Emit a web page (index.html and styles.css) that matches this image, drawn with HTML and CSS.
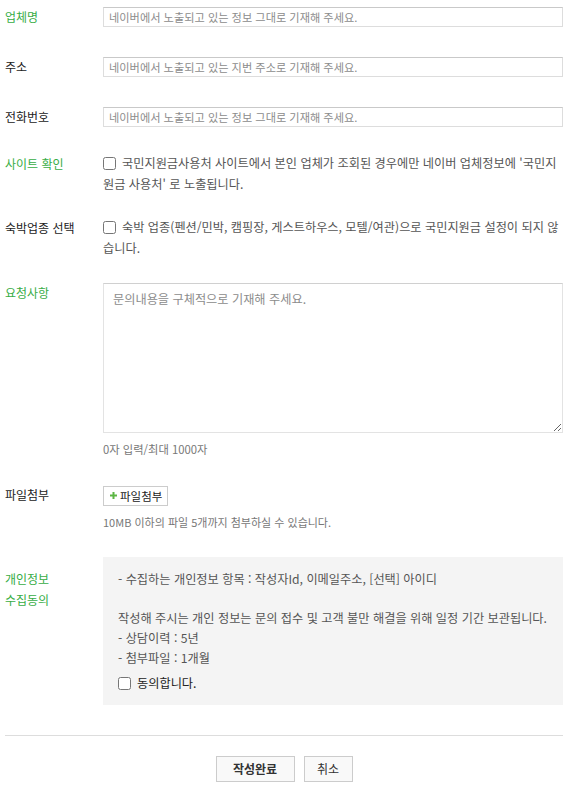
FILE: index.html
```html
<!DOCTYPE html>
<html lang="ko">
<head>
  <meta charset="utf-8">
  <title>문의하기</title>
  <link rel="stylesheet" href="styles.css">
</head>
<body>
  <form class="inquiry">
    <div class="row row-input">
      <label class="label point">업체명</label>
      <div class="field"><input type="text" class="text" placeholder="네이버에서 노출되고 있는 정보 그대로 기재해 주세요."></div>
    </div>
    <div class="row row-input">
      <label class="label">주소</label>
      <div class="field"><input type="text" class="text" placeholder="네이버에서 노출되고 있는 지번 주소로 기재해 주세요."></div>
    </div>
    <div class="row row-input row-last-input">
      <label class="label">전화번호</label>
      <div class="field"><input type="text" class="text" placeholder="네이버에서 노출되고 있는 정보 그대로 기재해 주세요."></div>
    </div>

    <div class="row row-check">
      <span class="label point">사이트 확인</span>
      <label class="field check-text"><input type="checkbox" class="chk">국민지원금사용처 사이트에서 본인 업체가 조회된 경우에만 네이버 업체정보에 '국민지원금 사용처' 로 노출됩니다.</label>
    </div>
    <div class="row row-check row-check2">
      <span class="label">숙박업종 선택</span>
      <label class="field check-text"><input type="checkbox" class="chk">숙박 업종(펜션/민박, 캠핑장, 게스트하우스, 모텔/여관)으로 국민지원금 설정이 되지 않습니다.</label>
    </div>

    <div class="row row-textarea">
      <label class="label point">요청사항</label>
      <div class="field">
        <textarea class="area" placeholder="문의내용을 구체적으로 기재해 주세요."></textarea>
        <p class="help count">0자 입력/최대 1000자</p>
      </div>
    </div>

    <div class="row row-file">
      <span class="label">파일첨부</span>
      <div class="field">
        <button type="button" class="btn-file"><svg width="7" height="7" viewBox="0 0 7 7"><path d="M2.5 0h2v2.5H7v2H4.5V7h-2V4.5H0v-2h2.5z" fill="#5cb644"/></svg>파일첨부</button>
        <p class="help">10MB 이하의 파일 5개까지 첨부하실 수 있습니다.</p>
      </div>
    </div>

    <div class="row row-agree">
      <span class="label point">개인정보<br>수집동의</span>
      <div class="field agree-box">
        <p>- 수집하는 개인정보 항목 : 작성자Id, 이메일주소, [선택] 아이디</p>
        <p class="gap">작성해 주시는 개인 정보는 문의 접수 및 고객 불만 해결을 위해 일정 기간 보관됩니다.</p>
        <p>- 상담이력 : 5년</p>
        <p>- 첨부파일 : 1개월</p>
        <label class="agree-check"><input type="checkbox" class="chk">동의합니다.</label>
      </div>
    </div>

    <div class="actions">
      <button type="button" class="btn btn-submit">작성완료</button>
      <button type="button" class="btn">취소</button>
    </div>
  </form>
</body>
</html>
```

FILE: styles.css
```css
body {
  margin: 0;
  font-family: "Noto Sans CJK KR", "Noto Sans", sans-serif;
  font-size: 12px;
  color: #333;
  background: #fff;
}
p {
  margin: 0;
}
.inquiry {
  padding: 7px 8px 0 5px;
}
.row {
  display: grid;
  grid-template-columns: 98px 1fr;
  align-items: start;
}
.label {
  font-size: 12px;
  color: #222;
  line-height: 20px;
}
.label.point {
  color: #37ad45;
}

/* text inputs */
.row-input {
  margin-bottom: 30px;
}
.row-last-input {
  margin-bottom: 26px;
}
.text {
  box-sizing: border-box;
  width: 100%;
  height: 20px;
  margin: 0;
  padding: 0 5px;
  border: 1px solid #ddd;
  border-top-color: #c9c9c9;
  font-family: inherit;
  font-size: 11.2px;
  color: #333;
  outline: none;
}
.text::placeholder,
.area::placeholder {
  color: #8c8c8c;
}

/* checkbox rows */
.row-check {
  margin-bottom: 22px;
}
.row-check .label {
  line-height: 21px;
}
.check-text {
  line-height: 21px;
  font-size: 12.2px;
  color: #555;
}
.chk {
  width: 13px;
  height: 13px;
  margin: 0 6px 0 0;
  vertical-align: -2px;
}
.row-check2 {
  margin-bottom: 24px;
}

/* textarea */
.row-textarea {
  margin-bottom: 27px;
}
.area {
  display: block;
  box-sizing: border-box;
  width: 100%;
  height: 150px;
  margin: 0;
  padding: 7px 9px;
  border: 1px solid #e3e3e3;
  border-top-color: #d0d0d0;
  font-family: inherit;
  font-size: 12.2px;
  line-height: 17px;
  outline: none;
}
.help {
  margin-top: 7px;
  font-size: 11px;
  line-height: 18px;
  color: #777;
}
.help.count {
  font-size: 11.3px;
}

/* file */
.row-file {
  margin-bottom: 26px;
}
.btn-file {
  display: inline-flex;
  align-items: center;
  gap: 3px;
  height: 20px;
  margin: 0;
  padding: 0 5px 0 6px;
  border: 1px solid #ccc;
  background: #fff;
  font-family: inherit;
  font-size: 11.5px;
  color: #222;
  cursor: pointer;
}

/* privacy agreement */
.row-agree {
  margin-bottom: 30px;
}
.row-agree .label {
  line-height: 21px;
  padding-top: 11px;
}
.agree-box {
  box-sizing: border-box;
  height: 148px;
  padding: 12px 15px 0;
  background: #f4f4f4;
  font-size: 12.2px;
  line-height: 20px;
  color: #555;
}
.agree-box .gap {
  margin-top: 19px;
}
.agree-check {
  display: block;
  margin-top: 5px;
  color: #222;
}

/* buttons */
.actions {
  display: flex;
  justify-content: center;
  gap: 9px;
  padding-top: 20px;
  border-top: 1px solid #ddd;
}
.btn {
  height: 26px;
  width: 49px;
  padding: 0;
  border: 1px solid #ccc;
  background: #f9f9f9;
  font-family: inherit;
  font-size: 12px;
  color: #333;
  cursor: pointer;
}
.btn-submit {
  width: 79px;
  font-weight: bold;
}
```
